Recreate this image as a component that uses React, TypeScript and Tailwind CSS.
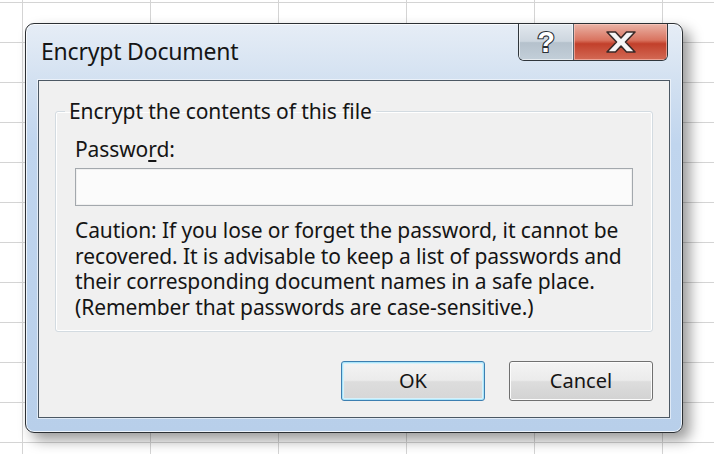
export default function App() {
  return (
    <div
      className="w-[714px] h-[454px] overflow-hidden bg-white bg-[linear-gradient(to_right,#d4d4d4_1px,transparent_1px),linear-gradient(to_bottom,#d4d4d4_1px,transparent_1px)] bg-size-[128px_40px] bg-position-[22px_2px] pl-[25px] pt-[23px] text-[#151515]"
      style={{ fontFamily: '"Noto Sans", "Open Sans", sans-serif' }}
    >
      {/* window */}
      <div className="w-[658px] h-[410px] flex flex-col rounded-[9px] border border-[#2b2f33] bg-[linear-gradient(to_bottom,#e6edf6_0px,#d3e1f1_56px,#c0d5ee_120px,#b8cfea_100%)] shadow-[inset_0_0_0_1px_rgba(255,255,255,0.75),7px_7px_14px_rgba(0,0,0,0.4)]">
        {/* title bar */}
        <div className="h-[56px] flex justify-between">
          <div className="pl-[15px] pt-[13px] text-[23px] leading-[28px] tracking-[-0.2px]">Encrypt Document</div>
          <div className="flex h-[37px] mr-[14px] border-x border-b border-[#30363c] rounded-b-[6px] overflow-hidden">
            <div className="w-[55px] flex items-center justify-center border-r border-[#5a646e] bg-[linear-gradient(to_bottom,#e2e8ee_0%,#cdd6df_48%,#b5c1cc_52%,#c3cfd9_100%)] shadow-[inset_0_0_0_1px_rgba(255,255,255,0.6)]">
              <svg width="28" height="34" viewBox="0 0 28 34">
                <text
                  x="14"
                  y="27"
                  textAnchor="middle"
                  fontSize="29"
                  fontWeight="700"
                  fontFamily="Liberation Sans, sans-serif"
                  fill="#ffffff"
                  stroke="#2a2f35"
                  strokeWidth="2.2"
                  paintOrder="stroke"
                >
                  ?
                </text>
              </svg>
            </div>
            <div className="w-[93px] flex items-center justify-center bg-[linear-gradient(to_bottom,#eab3a6_0%,#d9735f_45%,#c2402b_55%,#d36a55_100%)] shadow-[inset_0_0_0_1px_rgba(255,210,200,0.55)]">
              <svg width="36" height="24" viewBox="0 0 36 24">
                <path
                  d="M4 2 H12.5 L18 8 L23.5 2 H32 L22.5 12 L32 22 H23.5 L18 16 L12.5 22 H4 L13.5 12 Z"
                  fill="#f6f6f6"
                  stroke="#3a2a28"
                  strokeWidth="1.6"
                  strokeLinejoin="round"
                />
              </svg>
            </div>
          </div>
        </div>

        {/* client area */}
        <div className="mx-[12px] mb-[14px] flex-1 flex flex-col border border-[#4c5864] bg-[#f0f0f0] shadow-[0_0_0_1px_rgba(255,255,255,0.55)] px-[16px]">
          <fieldset className="mt-[18px] border border-[#d3dbe1] rounded-[3px] shadow-[inset_0_0_0_1px_#ffffff] px-[19px] pb-[11px]">
            <legend className="-ml-[10px] px-[4px] text-[21px] leading-[25px] tracking-[-0.1px]">Encrypt the contents of this file</legend>
            <div className="mt-[12px] text-[21px] leading-[26px] tracking-[-0.1px]">
              Passwo<span className="underline underline-offset-[3px]">r</span>d:
            </div>
            <div className="mt-[6px] h-[38px] border border-[#a3a8ad] bg-[#fbfbfb] shadow-[inset_0_0_0_1px_#f0f0f0]" />
            <p className="mt-[12px] text-[21px] leading-[25.5px] whitespace-nowrap tracking-[-0.1px]">
              Caution: If you lose or forget the password, it cannot be
              <br />
              recovered. It is advisable to keep a list of passwords and
              <br />
              their corresponding document names in a safe place.
              <br />
              (Remember that passwords are case-sensitive.)
            </p>
          </fieldset>

          <div className="mt-[29px] flex justify-end gap-[24px]">
            <button className="w-[144px] h-[40px] rounded-[3px] border border-[#3c7fb1] bg-[linear-gradient(to_bottom,#f4f4f4_0%,#ebebeb_48%,#dddddd_52%,#d6d6d6_100%)] shadow-[inset_0_0_0_1px_#a9e4f9,inset_0_0_0_2px_#d6f1fb] text-[20px]">
              OK
            </button>
            <button className="w-[144px] h-[40px] rounded-[3px] border border-[#707070] bg-[linear-gradient(to_bottom,#f4f4f4_0%,#ebebeb_48%,#dddddd_52%,#d2d2d2_100%)] shadow-[inset_0_0_0_1px_#fcfcfc] text-[20px]">
              Cancel
            </button>
          </div>
        </div>
      </div>
    </div>
  );
}
